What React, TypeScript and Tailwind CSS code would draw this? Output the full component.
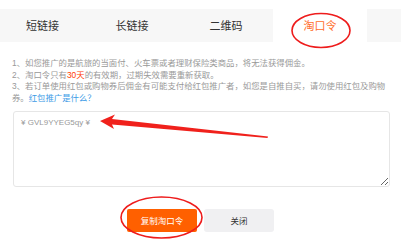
import React from 'react';

const tabs = [
  { label: '短链接', w: 'w-[85px]' },
  { label: '长链接', w: 'w-[94px]' },
  { label: '二维码', w: 'w-[94px]' },
];

export default function App() {
  return (
    <main
      className="relative w-[401px] h-[248px] overflow-hidden bg-white pt-[9px]"
      style={{ fontFamily: '"Liberation Sans", "Noto Sans CJK SC", sans-serif' }}
    >
      <div className="flex h-[33px]">
        {tabs.map((t) => (
          <div
            key={t.label}
            className={`${t.w} flex items-center justify-center bg-[#f7f7f7] text-[11px] text-[#333] pt-[1px]`}
          >
            {t.label}
          </div>
        ))}
        <div className="w-[94px] flex items-center justify-center bg-white text-[11px] text-[#ff6d2a] pt-[1px]">
          淘口令
        </div>
        <div className="flex-1 bg-[#f7f7f7]" />
      </div>

      <div className="mt-[16px] px-[12px] text-[8.4px] leading-[11.6px] text-[#999]">
        <p>1、如您推广的是航旅的当面付、火车票或者理财保险类商品，将无法获得佣金。</p>
        <p>
          2、淘口令只有<span className="text-[#ff3c00]">30天</span>的有效期，过期失效需要重新获取。
        </p>
        <p>
          3、若订单使用红包或购物券后佣金有可能支付给红包推广者，如您是自推自买，请勿使用红包及购物券。
          <span className="text-[#3b9be6]">红包推广是什么？</span>
        </p>
      </div>

      <div className="mt-[7px] px-[13px] pr-[11px]">
        <textarea
          readOnly
          defaultValue="¥ GVL9YYEG5qy ¥"
          className="block w-full h-[76px] rounded-[3px] border border-[#e6e6e6] px-[7px] pt-[5px] text-[8px] leading-[12px] text-[#999] outline-none"
        />
      </div>

      <div className="mt-[22px] flex justify-center gap-[7px]">
        <button className="w-[70px] h-[23px] rounded-[2px] bg-[#ff6000] text-[8.5px] text-white">
          复制淘口令
        </button>
        <button className="w-[70px] h-[23px] rounded-[3px] bg-[#f0f0f2] text-[8.5px] text-[#333]">
          关闭
        </button>
      </div>

      <svg className="absolute left-0 top-0 pointer-events-none" width="401" height="248">
        <ellipse cx="321" cy="30.5" rx="29" ry="17" fill="none" stroke="#ee1c1c" strokeWidth="1.6" />
        <ellipse cx="161.5" cy="217.5" rx="40.5" ry="20.5" fill="none" stroke="#ee1c1c" strokeWidth="1.6" />
        <polygon
          points="100,121 115,114.5 112,119 268,136.5 267.5,138 112,124.5 114,129"
          fill="#f0211c"
        />
      </svg>
    </main>
  );
}
